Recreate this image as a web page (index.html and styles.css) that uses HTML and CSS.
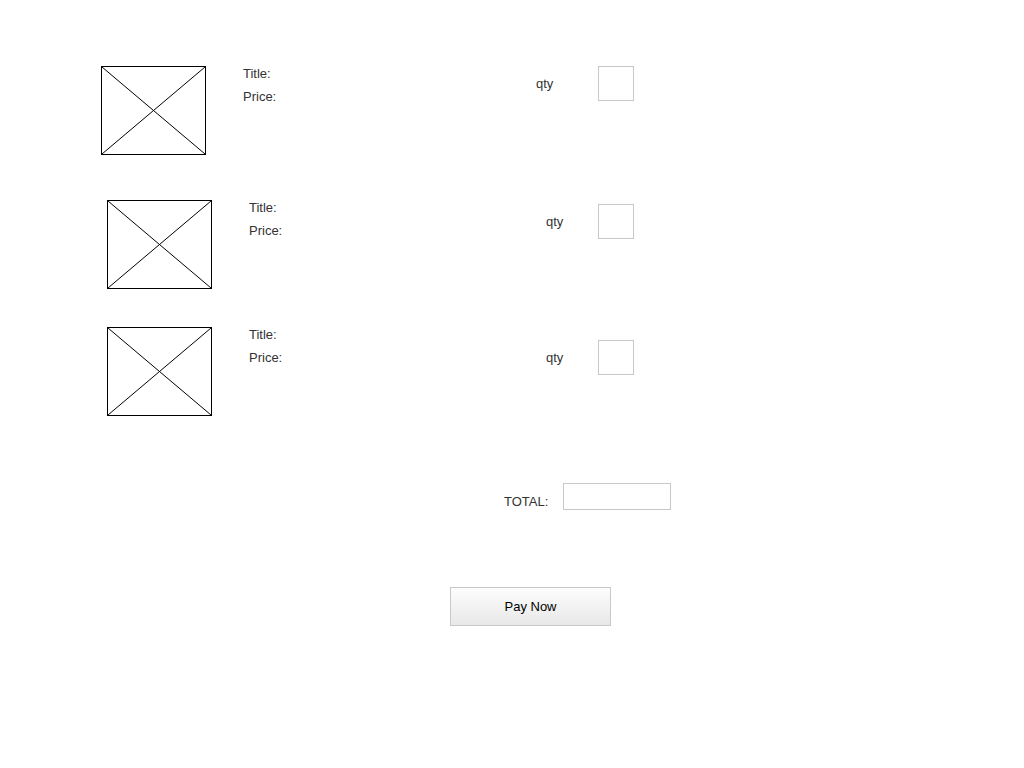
FILE: index.html
```html
<!DOCTYPE html>
<html lang="en">
<head>
    <meta charset="UTF-8">
    <meta name="viewport" content="width=device-width, initial-scale=1.0">
    <title>Cart</title>
    <link rel="stylesheet" href="styles.css">
</head>
<body>
    <div class="cart">
        <div class="item item-first">
            <div class="thumb">
                <svg viewBox="0 0 103 87" preserveAspectRatio="none">
                    <line x1="0" y1="0" x2="103" y2="87" />
                    <line x1="103" y1="0" x2="0" y2="87" />
                </svg>
            </div>
            <div class="info">
                <div>Title:</div>
                <div>Price:</div>
            </div>
            <div class="qty-label">qty</div>
            <div class="qty-box"></div>
        </div>

        <div class="item item-second">
            <div class="thumb">
                <svg viewBox="0 0 103 87" preserveAspectRatio="none">
                    <line x1="0" y1="0" x2="103" y2="87" />
                    <line x1="103" y1="0" x2="0" y2="87" />
                </svg>
            </div>
            <div class="info">
                <div>Title:</div>
                <div>Price:</div>
            </div>
            <div class="qty-label">qty</div>
            <div class="qty-box"></div>
        </div>

        <div class="item item-third">
            <div class="thumb">
                <svg viewBox="0 0 103 87" preserveAspectRatio="none">
                    <line x1="0" y1="0" x2="103" y2="87" />
                    <line x1="103" y1="0" x2="0" y2="87" />
                </svg>
            </div>
            <div class="info">
                <div>Title:</div>
                <div>Price:</div>
            </div>
            <div class="qty-label">qty</div>
            <div class="qty-box"></div>
        </div>

        <div class="total-row">
            <div class="total-label">TOTAL:</div>
            <div class="total-box"></div>
        </div>

        <div class="pay-row">
            <button class="pay-btn">Pay Now</button>
        </div>
    </div>
</body>
</html>
```

FILE: styles.css
```css
body {
    margin: 0;
    padding: 0;
    background-color: #fff;
    font-family: 'Liberation Sans', Arial, sans-serif;
    font-size: 13px;
    color: #333;
}
.cart {
    padding-top: 66px;
}
.item {
    display: flex;
    align-items: flex-start;
    height: 90px;
}
.thumb {
    width: 103px;
    height: 87px;
    border: 1px solid #000;
    flex-shrink: 0;
}
.thumb svg {
    display: block;
    width: 100%;
    height: 100%;
}
.thumb line {
    stroke: #000;
    stroke-width: 1;
}
.info {
    line-height: 23px;
    margin-left: 37px;
    margin-top: -4px;
}
.qty-label {
    line-height: 23px;
}
.qty-box {
    width: 34px;
    height: 33px;
    border: 1px solid #c8c8c8;
}

/* each row sits a little differently */
.item-first {
    padding-left: 101px;
}
.item-first .info {
    width: 293px;
}
.item-first .qty-label {
    width: 62px;
    margin-top: 6px;
}
.item-second {
    padding-left: 107px;
    margin-top: 44px;
}
.item-second .info {
    width: 297px;
    margin-top: -4px;
}
.item-second .qty-label {
    width: 52px;
    margin-top: 10px;
}
.item-second .qty-box {
    margin-top: 4px;
}
.item-third {
    padding-left: 107px;
    margin-top: 37px;
}
.item-third .info {
    width: 297px;
    margin-top: -4px;
}
.item-third .qty-label {
    width: 52px;
    margin-top: 19px;
}
.item-third .qty-box {
    margin-top: 13px;
}
.total-row {
    display: flex;
    align-items: flex-start;
    padding-left: 504px;
    margin-top: 66px;
}
.total-label {
    width: 59px;
    line-height: 23px;
    margin-top: 7px;
}
.total-box {
    width: 106px;
    height: 25px;
    border: 1px solid #c8c8c8;
}
.pay-row {
    padding-left: 450px;
    margin-top: 74px;
}
.pay-btn {
    width: 161px;
    height: 39px;
    border: 1px solid #c8c8c8;
    background: linear-gradient(#fdfdfd, #e8e8e8);
    font-family: 'Liberation Sans', Arial, sans-serif;
    font-size: 13px;
    color: #000;
    padding: 0;
}
```
